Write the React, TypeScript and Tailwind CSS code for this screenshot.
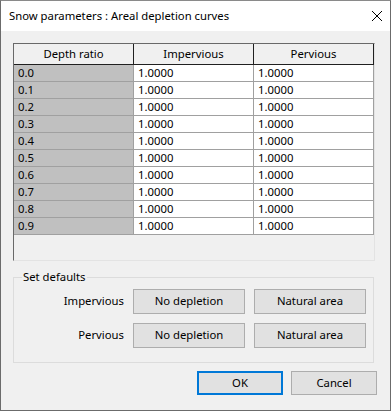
import React from "react";

const rows = ["0.0", "0.1", "0.2", "0.3", "0.4", "0.5", "0.6", "0.7", "0.8", "0.9"];

function Btn({ children, className = "" }: { children: React.ReactNode; className?: string }) {
  return (
    <div
      className={`flex items-center justify-center bg-[#e1e1e1] border border-[#adadad] text-[11.3px] text-black ${className}`}
    >
      {children}
    </div>
  );
}

export default function App() {
  return (
    <div
      className="w-[391px] h-[411px] flex flex-col bg-[#f0f0f0] border border-[#6b6b6b] border-t-[#8a8a8a] overflow-hidden"
      style={{ fontFamily: '"Noto Sans", "Open Sans", sans-serif' }}
    >
      {/* title bar */}
      <div className="h-[30px] bg-white flex items-center justify-between pl-[8px] pr-[6px] shrink-0">
        <span className="text-[11.3px] text-black">Snow parameters : Areal depletion curves</span>
        <svg width="12" height="12" viewBox="0 0 12 12" className="mr-[1px]">
          <path d="M1 1 L11 11 M11 1 L1 11" stroke="#000" strokeWidth="1" fill="none" />
        </svg>
      </div>

      <div className="flex flex-col px-[12px] pt-[12px]">
        {/* grid */}
        <div className="w-[362px] h-[218px] border-l border-t border-[#696969] border-r border-b border-r-[#e3e3e3] border-b-[#e3e3e3] bg-[#f0f0f0] flex flex-col">
          <div className="h-[21px] flex bg-[#f0f0f0] border-b border-[#202020] text-[11.3px] text-black">
            <div className="w-[120px] border-r border-[#202020] flex items-center justify-center">Depth ratio</div>
            <div className="w-[120px] border-r border-[#202020] flex items-center justify-center">Impervious</div>
            <div className="w-[120px] border-r border-[#202020] flex items-center justify-center">Pervious</div>
          </div>
          {rows.map((r) => (
            <div key={r} className="h-[17px] flex border-b border-[#a0a0a0] text-[11.3px] text-black leading-none">
              <div className="w-[120px] bg-[#c0c0c0] border-r border-[#a0a0a0] flex items-center pl-[4px]">{r}</div>
              <div className="w-[120px] bg-white border-r border-[#a0a0a0] flex items-center pl-[4px]">1.0000</div>
              <div className="w-[120px] bg-white border-r border-[#a0a0a0] flex items-center pl-[4px]">1.0000</div>
            </div>
          ))}
        </div>

        {/* group box */}
        <div className="relative mt-[16px] w-[361px] h-[86px] border border-[#dcdcdc] flex flex-col pt-[11px] gap-[9px]">
          <span className="absolute left-[8px] top-[-10px] px-[1px] bg-[#f0f0f0] text-[11.3px] text-black leading-[18px]">
            Set defaults
          </span>
          <div className="flex items-center">
            <span className="w-[110px] text-right text-[11.3px] text-black">Impervious</span>
            <Btn className="ml-[9px] w-[112px] h-[25px]">No depletion</Btn>
            <Btn className="ml-[9px] w-[112px] h-[25px]">Natural area</Btn>
          </div>
          <div className="flex items-center">
            <span className="w-[110px] text-right text-[11.3px] text-black">Pervious</span>
            <Btn className="ml-[9px] w-[112px] h-[25px]">No depletion</Btn>
            <Btn className="ml-[9px] w-[112px] h-[25px]">Natural area</Btn>
          </div>
        </div>

        <div className="flex justify-end gap-[8px] mt-[8px] pr-[1px]">
          <div className="w-[86px] h-[24px] flex items-center justify-center bg-[#e1e1e1] border-2 border-[#0078d7] text-[11.3px] text-black">
            OK
          </div>
          <Btn className="w-[86px] h-[24px]">Cancel</Btn>
        </div>
      </div>
    </div>
  );
}
